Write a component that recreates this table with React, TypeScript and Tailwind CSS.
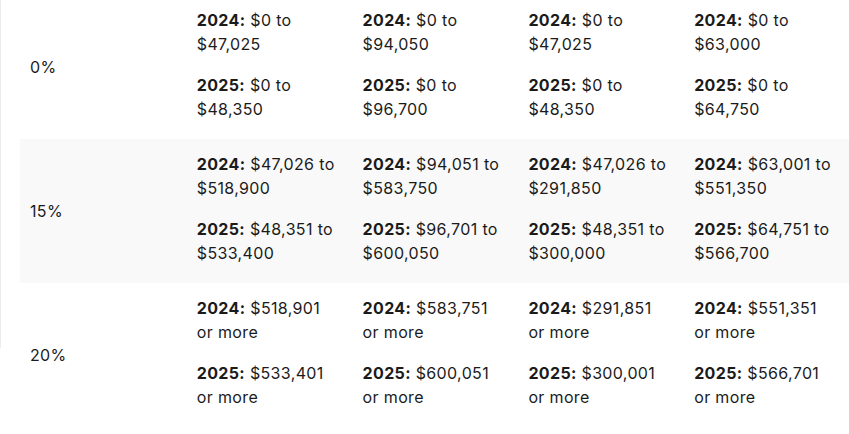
import React from 'react';

interface Range {
  year: string;
  first: string;
  second: string;
}

interface Bracket {
  rate: string;
  shaded: boolean;
  cells: Range[][];
}

const brackets: Bracket[] = [
  {
    rate: '0%',
    shaded: false,
    cells: [
      [{ year: '2024:', first: '$0 to', second: '$47,025' }, { year: '2025:', first: '$0 to', second: '$48,350' }],
      [{ year: '2024:', first: '$0 to', second: '$94,050' }, { year: '2025:', first: '$0 to', second: '$96,700' }],
      [{ year: '2024:', first: '$0 to', second: '$47,025' }, { year: '2025:', first: '$0 to', second: '$48,350' }],
      [{ year: '2024:', first: '$0 to', second: '$63,000' }, { year: '2025:', first: '$0 to', second: '$64,750' }],
    ],
  },
  {
    rate: '15%',
    shaded: true,
    cells: [
      [{ year: '2024:', first: '$47,026 to', second: '$518,900' }, { year: '2025:', first: '$48,351 to', second: '$533,400' }],
      [{ year: '2024:', first: '$94,051 to', second: '$583,750' }, { year: '2025:', first: '$96,701 to', second: '$600,050' }],
      [{ year: '2024:', first: '$47,026 to', second: '$291,850' }, { year: '2025:', first: '$48,351 to', second: '$300,000' }],
      [{ year: '2024:', first: '$63,001 to', second: '$551,350' }, { year: '2025:', first: '$64,751 to', second: '$566,700' }],
    ],
  },
  {
    rate: '20%',
    shaded: false,
    cells: [
      [{ year: '2024:', first: '$518,901', second: 'or more' }, { year: '2025:', first: '$533,401', second: 'or more' }],
      [{ year: '2024:', first: '$583,751', second: 'or more' }, { year: '2025:', first: '$600,051', second: 'or more' }],
      [{ year: '2024:', first: '$291,851', second: 'or more' }, { year: '2025:', first: '$300,001', second: 'or more' }],
      [{ year: '2024:', first: '$551,351', second: 'or more' }, { year: '2025:', first: '$566,701', second: 'or more' }],
    ],
  },
];

export default function App() {
  return (
    <div className="relative h-[434px] w-[849px] overflow-hidden bg-white font-['Inter',sans-serif] text-[16px] leading-6 tracking-[0.35px] text-[#1b1b1b]">
      {/* stray border from the enclosing box */}
      <div className="absolute left-0 top-0 h-[348px] w-px bg-[#ececec]" />
      <div className="-mt-[5px] ml-5">
        {brackets.map((b) => (
          <div key={b.rate} className={`grid grid-cols-5 ${b.shaded ? 'bg-[#f9f9f9]' : ''}`}>
            <div className="flex items-center px-[10px]">{b.rate}</div>
            {b.cells.map((col, i) => (
              <div key={i} className="flex flex-col gap-[17px] px-[11px] pb-[18px] pt-[13px]">
                {col.map((r) => (
                  <p key={r.year}>
                    <span className="font-bold">{r.year}</span> {r.first}
                    <br />
                    {r.second}
                  </p>
                ))}
              </div>
            ))}
          </div>
        ))}
      </div>
    </div>
  );
}
